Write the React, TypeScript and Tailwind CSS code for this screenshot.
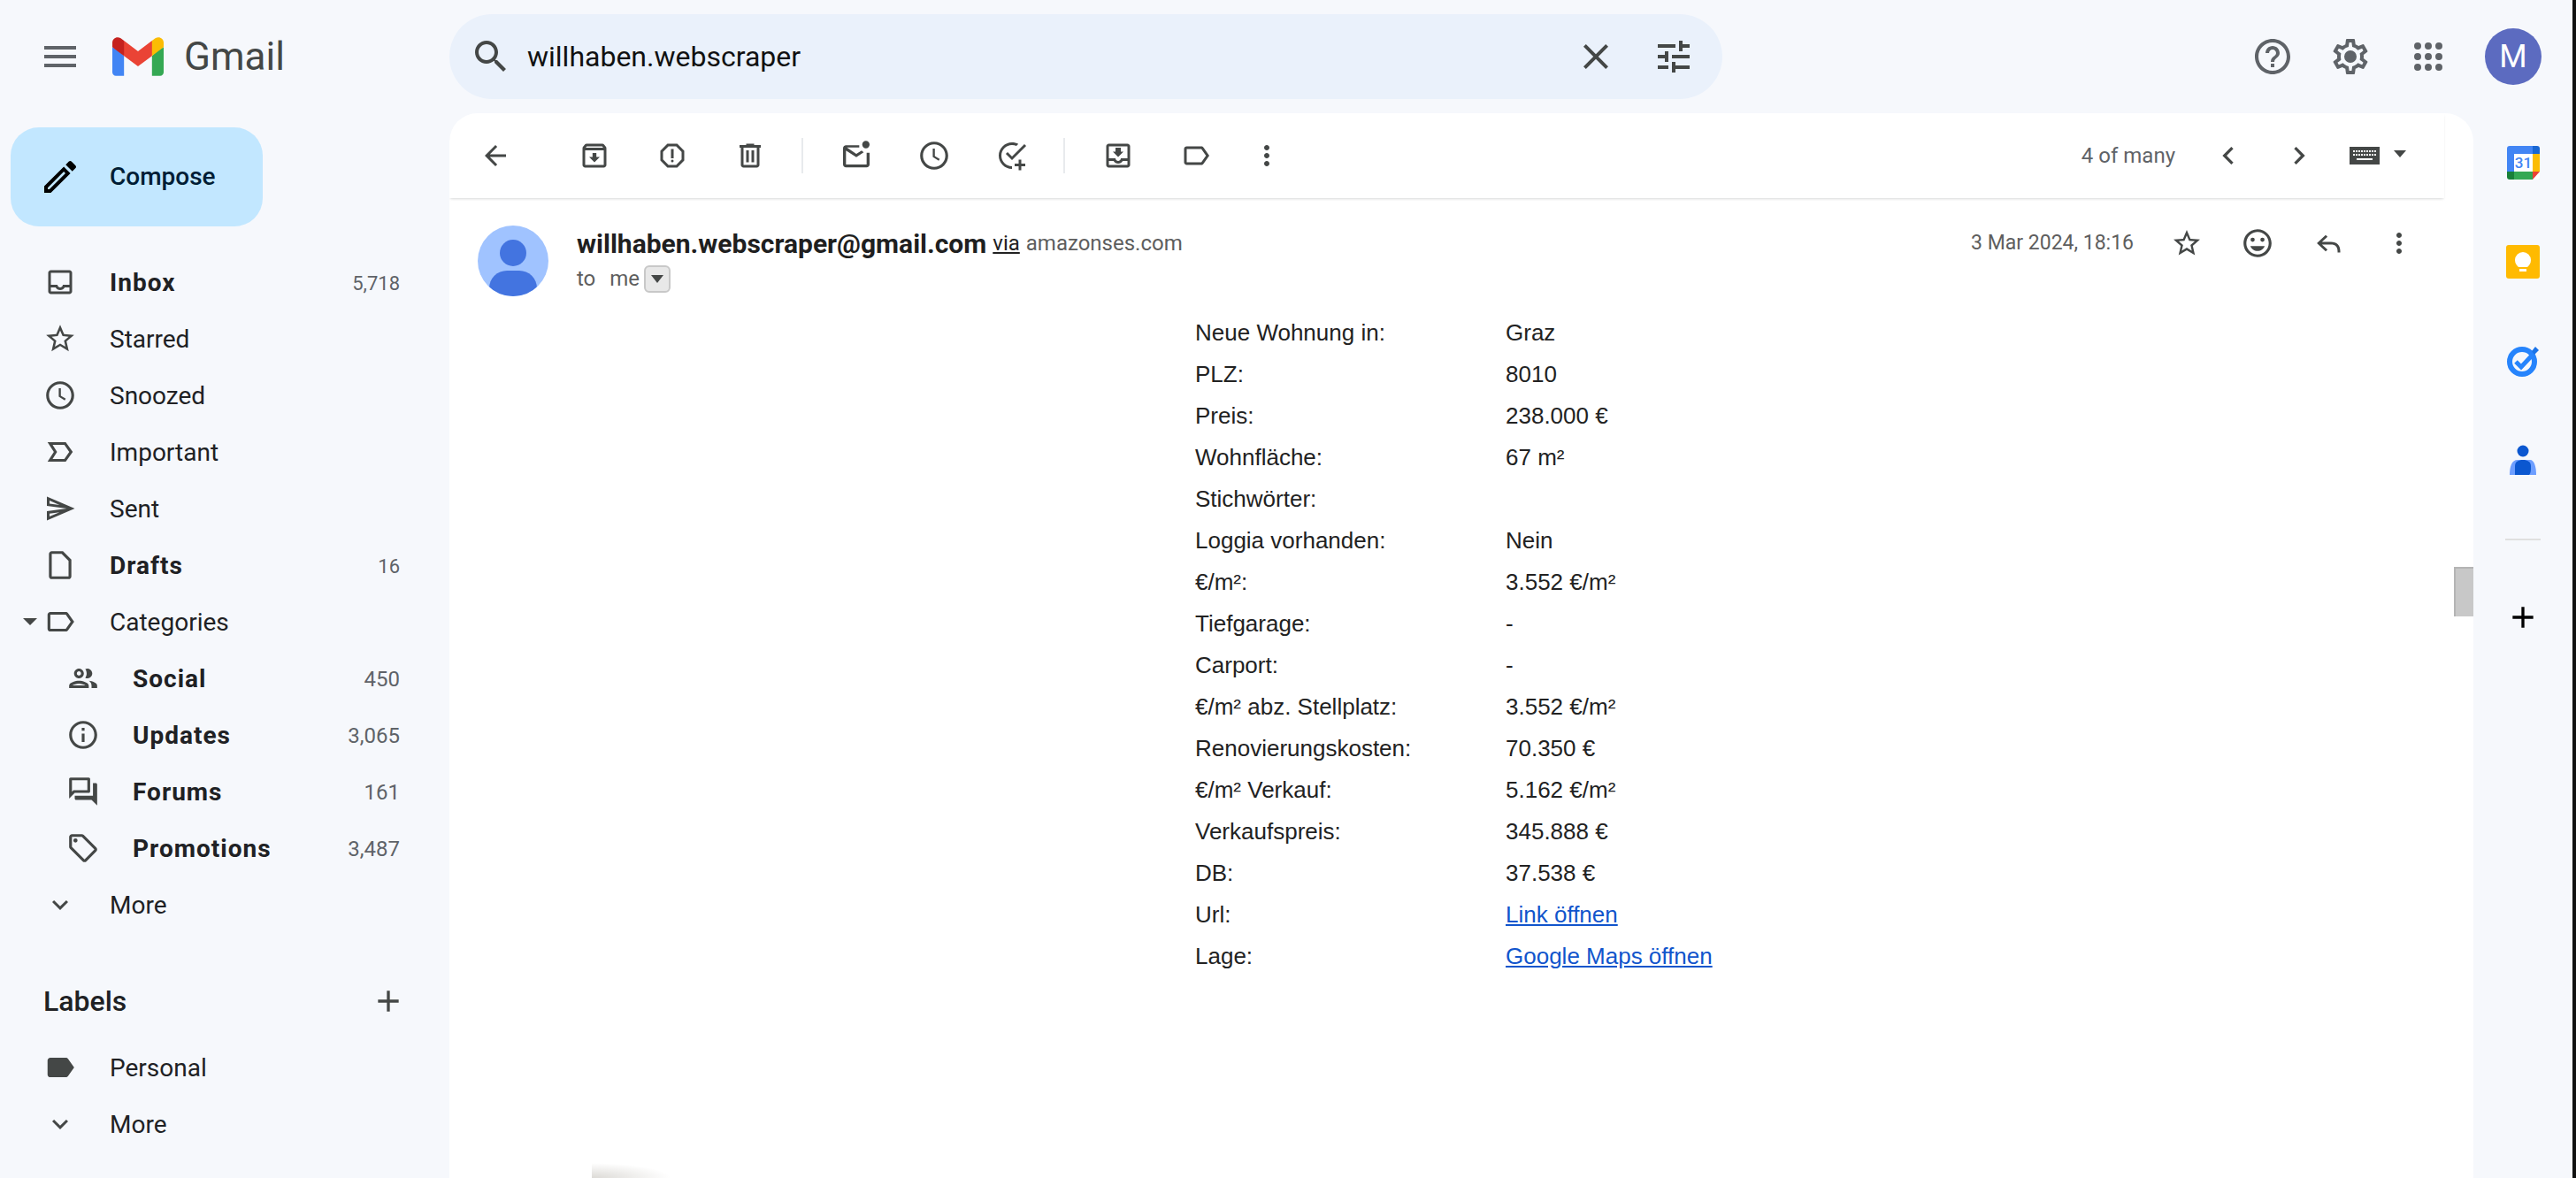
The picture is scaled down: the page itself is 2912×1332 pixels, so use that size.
const paths = {
  menu: 'M3 18h18v-2H3v2zm0-5h18v-2H3v2zm0-7v2h18V6H3z',
  search: 'M15.5 14h-.79l-.28-.27C15.41 12.59 16 11.11 16 9.5 16 5.91 13.09 3 9.5 3S3 5.91 3 9.5 5.91 16 9.5 16c1.61 0 3.09-.59 4.23-1.57l.27.28v.79l5 4.99L20.49 19l-4.99-5zm-6 0C7.01 14 5 11.99 5 9.5S7.01 5 9.5 5 14 7.01 14 9.5 11.99 14 9.5 14z',
  close: 'M19 6.41L17.59 5 12 10.59 6.41 5 5 6.41 10.59 12 5 17.59 6.41 19 12 13.41 17.59 19 19 17.59 13.41 12z',
  tune: 'M3 17v2h6v-2H3zM3 5v2h10V5H3zm10 16v-2h8v-2h-8v-2h-2v6h2zM7 9v2H3v2h4v2h2V9H7zm14 4v-2H11v2h10zm-6-4h2V7h4V5h-4V3h-2v6z',
  help: 'M11 18h2v-2h-2v2zm1-16C6.48 2 2 6.48 2 12s4.48 10 10 10 10-4.48 10-10S17.52 2 12 2zm0 18c-4.41 0-8-3.59-8-8s3.59-8 8-8 8 3.59 8 8-3.59 8-8 8zm0-14c-2.21 0-4 1.79-4 4h2c0-1.1.9-2 2-2s2 .9 2 2c0 2-3 1.75-3 5h2c0-2.25 3-2.5 3-5 0-2.21-1.79-4-4-4z',
  settings: 'M19.43 12.98c.04-.32.07-.64.07-.98 0-.34-.03-.66-.07-.98l2.11-1.65c.19-.15.24-.42.12-.64l-2-3.46c-.09-.16-.26-.25-.44-.25-.06 0-.12.01-.17.03l-2.49 1c-.52-.4-1.08-.73-1.69-.98l-.38-2.65C14.46 2.18 14.25 2 14 2h-4c-.25 0-.46.18-.49.42l-.38 2.65c-.61.25-1.17.59-1.69.98l-2.49-1c-.06-.02-.12-.03-.18-.03-.17 0-.34.09-.43.25l-2 3.46c-.13.22-.07.49.12.64l2.11 1.65c-.04.32-.07.65-.07.98 0 .33.03.66.07.98l-2.11 1.65c-.19.15-.24.42-.12.64l2 3.46c.09.16.26.25.44.25.06 0 .12-.01.17-.03l2.49-1c.52.4 1.08.73 1.69.98l.38 2.65c.03.24.24.42.49.42h4c.25 0 .46-.18.49-.42l.38-2.65c.61-.25 1.17-.59 1.69-.98l2.49 1c.06.02.12.03.18.03.17 0 .34-.09.43-.25l2-3.46c.12-.22.07-.49-.12-.64l-2.11-1.65zm-1.98-1.71c.04.31.05.52.05.73 0 .21-.02.43-.05.73l-.14 1.13.89.7 1.08.84-.7 1.21-1.27-.51-1.04-.42-.9.68c-.43.32-.84.56-1.25.73l-1.06.43-.16 1.13-.2 1.35h-1.4l-.19-1.35-.16-1.13-1.06-.43c-.43-.18-.83-.41-1.23-.71l-.91-.7-1.06.43-1.27.51-.7-1.21 1.08-.84.89-.7-.14-1.13c-.03-.31-.05-.54-.05-.74s.02-.43.05-.73l.14-1.13-.89-.7-1.08-.84.7-1.21 1.27.51 1.04.42.9-.68c.43-.32.84-.56 1.25-.73l1.06-.43.16-1.13.2-1.35h1.39l.19 1.35.16 1.13 1.06.43c.43.18.83.41 1.23.71l.91.7 1.06-.43 1.27-.51.7 1.21-1.07.85-.89.7.14 1.13zM12 8.5a3.5 3.5 0 1 0 0 7 3.5 3.5 0 0 0 0-7z',
  apps: 'M6 8a2 2 0 1 0 0-4 2 2 0 0 0 0 4zm6 0a2 2 0 1 0 0-4 2 2 0 0 0 0 4zm6 0a2 2 0 1 0 0-4 2 2 0 0 0 0 4zM6 14a2 2 0 1 0 0-4 2 2 0 0 0 0 4zm6 0a2 2 0 1 0 0-4 2 2 0 0 0 0 4zm6 0a2 2 0 1 0 0-4 2 2 0 0 0 0 4zM6 20a2 2 0 1 0 0-4 2 2 0 0 0 0 4zm6 0a2 2 0 1 0 0-4 2 2 0 0 0 0 4zm6 0a2 2 0 1 0 0-4 2 2 0 0 0 0 4z',
  edit: 'M14.06 9.02l.92.92L5.92 19H5v-.92l9.06-9.06M17.66 3c-.25 0-.51.1-.7.29l-1.83 1.83 3.75 3.75 1.83-1.83c.39-.39.39-1.02 0-1.41l-2.34-2.34c-.2-.2-.45-.29-.71-.29zm-3.6 3.19L3 17.25V21h3.75L17.81 9.94l-3.75-3.75z',
  inbox: 'M19 3H5c-1.1 0-2 .9-2 2v14c0 1.1.9 2 2 2h14c1.1 0 2-.9 2-2V5c0-1.1-.9-2-2-2zm0 16H5v-3h3.56c.69 1.19 1.97 2 3.45 2s2.75-.81 3.45-2H19v3zm0-5h-4.99c0 1.1-.9 2-2 2s-2-.9-2-2H5V5h14v9z',
  star: 'M22 9.24l-7.19-.62L12 2 9.19 8.63 2 9.24l5.46 4.73L5.82 21 12 17.27 18.18 21l-1.63-7.03L22 9.24zM12 15.4l-3.76 2.27 1-4.28-3.32-2.88 4.38-.38L12 6.1l1.71 4.04 4.38.38-3.32 2.88 1 4.28L12 15.4z',
  clock: 'M11.99 2C6.47 2 2 6.48 2 12s4.47 10 9.99 10C17.52 22 22 17.52 22 12S17.52 2 11.99 2zM12 20c-4.42 0-8-3.58-8-8s3.58-8 8-8 8 3.58 8 8-3.58 8-8 8zm.5-13H11v6l4.25 2.6.75-1.23-3.5-2.1z',
  important: 'M16 19H3l4.5-7L3 5h13l5 7-5 7zM6.6 17h8.4l3.5-5L15 7H6.6l3.2 5-3.2 5z',
  send: 'M4.01 6.03l7.51 3.22-7.52-1 .01-2.22m7.5 8.72L4 17.97v-2.22l7.51-1M2.01 3L2 10l15 2-15 2 .01 7L23 12 2.01 3z',
  draft: 'M14 2H6c-1.1 0-2 .9-2 2v16c0 1.1.9 2 2 2h12c1.1 0 2-.9 2-2V8l-6-6zm4 18H6V4h7l5 5v11z',
  label: 'M17.63 5.84C17.27 5.33 16.67 5 16 5L5 5.01C3.9 5.01 3 5.9 3 7v10c0 1.1.9 1.99 2 1.99L16 19c.67 0 1.27-.33 1.63-.84L22 12l-4.37-6.16zM16 17H5V7h11l3.55 5L16 17z',
  labelFill: 'M17.63 5.84C17.27 5.33 16.67 5 16 5L5 5.01C3.9 5.01 3 5.9 3 7v10c0 1.1.9 1.99 2 1.99L16 19c.67 0 1.27-.33 1.63-.84L22 12l-4.37-6.16z',
  people: 'M9 13.75c-2.34 0-7 1.17-7 3.5V19h14v-1.75c0-2.33-4.66-3.5-7-3.5zM4.34 17c.84-.58 2.87-1.25 4.66-1.25s3.82.67 4.66 1.25H4.34zM9 12c1.93 0 3.5-1.57 3.5-3.5S10.93 5 9 5 5.5 6.57 5.5 8.5 7.07 12 9 12zm0-5c.83 0 1.5.67 1.5 1.5S9.83 10 9 10s-1.5-.67-1.5-1.5S8.17 7 9 7zm7.04 6.81c1.16.84 1.96 1.96 1.96 3.44V19h4v-1.75c0-2.02-3.5-3.17-5.96-3.44zM15 12c1.93 0 3.5-1.57 3.5-3.5S16.93 5 15 5c-.54 0-1.04.13-1.5.35.63.89 1 1.98 1 3.15s-.37 2.26-1 3.15c.46.22.96.35 1.5.35z',
  info: 'M11 7h2v2h-2zm0 4h2v6h-2zm1-9C6.48 2 2 6.48 2 12s4.48 10 10 10 10-4.48 10-10S17.52 2 12 2zm0 18c-4.41 0-8-3.59-8-8s3.59-8 8-8 8 3.59 8 8-3.59 8-8 8z',
  forum: 'M15 4v7H5.17l-.59.59-.58.58V4h11m1-2H3c-.55 0-1 .45-1 1v14l4-4h10c.55 0 1-.45 1-1V3c0-.55-.45-1-1-1zm5 4h-2v9H6v2c0 .55.45 1 1 1h11l4 4V7c0-.55-.45-1-1-1z',
  tag: 'M21.41 11.58l-9-9C12.05 2.22 11.55 2 11 2H4c-1.1 0-2 .9-2 2v7c0 .55.22 1.05.59 1.42l9 9c.36.36.86.58 1.41.58s1.05-.22 1.41-.59l7-7c.37-.36.59-.86.59-1.41s-.23-1.06-.59-1.42zM13 20.01L4 11V4h7v-.01l9 9-7 7.02zM6.5 5a1.5 1.5 0 1 0 0 3 1.5 1.5 0 0 0 0-3z',
  expand: 'M16.59 8.59L12 13.17 7.41 8.59 6 10l6 6 6-6z',
  plus: 'M19 13h-6v6h-2v-6H5v-2h6V5h2v6h6v2z',
  back: 'M20 11H7.83l5.59-5.59L12 4l-8 8 8 8 1.41-1.41L7.83 13H20v-2z',
  archive: 'M20.54 5.23l-1.39-1.68C18.88 3.21 18.47 3 18 3H6c-.47 0-.88.21-1.16.55L3.46 5.23C3.17 5.57 3 6.02 3 6.5V19c0 1.1.9 2 2 2h14c1.1 0 2-.9 2-2V6.5c0-.48-.17-.93-.46-1.27zM6.24 5h11.52l.81.97H5.44l.8-.97zM5 19V8h14v11H5zm8.45-9h-2.9v3H8l4 4 4-4h-2.55z',
  spam: 'M15.73 3H8.27L3 8.27v7.46L8.27 21h7.46L21 15.73V8.27L15.73 3zM19 14.9L14.9 19H9.1L5 14.9V9.1L9.1 5h5.8L19 9.1v5.8zM11 7h2v7h-2zm1 8a1 1 0 1 0 0 2 1 1 0 0 0 0-2z',
  trash: 'M15 4V3H9v1H4v2h1v13c0 1.1.9 2 2 2h10c1.1 0 2-.9 2-2V6h1V4h-5zm2 15H7V6h10v13zM9 8h2v9H9zm4 0h2v9h-2z',
  unread: 'M19 10v8H5V8.5l7 4.5 5-3.2-1.4-1.3L12 10.8 5.6 6.5H14V5H5c-1.1 0-2 .9-2 2v11c0 1.1.9 2 2 2h14c1.1 0 2-.9 2-2v-8zM18.5 2a2.5 2.5 0 1 0 0 5 2.5 2.5 0 0 0 0-5z',
  addTask: 'M21.3 3.3l1.4 1.4L12 15.4l-4.7-4.7 1.4-1.4 3.3 3.3zM12 4c1.2 0 2.3.3 3.3.7l1.5-1.5C15.4 2.4 13.8 2 12 2 6.5 2 2 6.5 2 12s4.5 10 10 10v-2c-4.4 0-8-3.6-8-8s3.6-8 8-8zM19 15h-2v3h-3v2h3v3h2v-3h3v-2h-3z',
  moveInbox: 'M19 3H4.99c-1.11 0-1.98.9-1.98 2L3 19c0 1.1.88 2 1.99 2H19c1.1 0 2-.9 2-2V5c0-1.1-.9-2-2-2zm0 16H5v-3h3.56c.69 1.19 1.97 2 3.45 2s2.75-.81 3.45-2H19v3zm0-5h-4.99c0 1.1-.9 2-2 2s-2-.9-2-2H5V5h14v9zm-3-5h-2V6h-4v3H8l4 4 4-4z',
  more: 'M12 8c1.1 0 2-.9 2-2s-.9-2-2-2-2 .9-2 2 .9 2 2 2zm0 2c-1.1 0-2 .9-2 2s.9 2 2 2 2-.9 2-2-.9-2-2-2zm0 6c-1.1 0-2 .9-2 2s.9 2 2 2 2-.9 2-2-.9-2-2-2z',
  left: 'M15.41 7.41L14 6l-6 6 6 6 1.41-1.41L10.83 12z',
  right: 'M10 6L8.59 7.41 13.17 12l-4.58 4.59L10 18l6-6z',
  smile: 'M11.99 2C6.47 2 2 6.48 2 12s4.47 10 9.99 10C17.52 22 22 17.52 22 12S17.52 2 11.99 2zM12 20c-4.42 0-8-3.58-8-8s3.58-8 8-8 8 3.58 8 8-3.58 8-8 8zM8.5 8a1.5 1.5 0 1 0 0 3 1.5 1.5 0 0 0 0-3zm7 0a1.5 1.5 0 1 0 0 3 1.5 1.5 0 0 0 0-3zM12 17.5c2.33 0 4.3-1.46 5.11-3.5H6.89c.8 2.04 2.78 3.5 5.11 3.5z',
  reply: 'M10 9V5.8L3.4 12 10 18.2l1.4-1.4L7.2 13H14c3.3 0 5 1.7 5 5v1h2v-1c0-4.4-2.6-7-7-7H7.2l4.2-3.8L10 5.8z',
};

function Icon({ name, className }: { name: keyof typeof paths; className?: string }) {
  return (
    <svg viewBox="0 0 24 24" className={className ?? 'size-[36px]'} fill="currentColor">
      <path d={paths[name]} />
    </svg>
  );
}

function IconBtn({ name, className }: { name: keyof typeof paths; className?: string }) {
  return (
    <div className="flex h-[80px] w-[80px] shrink-0 items-center justify-center text-[#444746]">
      <Icon name={name} className={className} />
    </div>
  );
}

function GmailLogo() {
  return (
    <svg viewBox="0 0 256 193" className="h-[44px] w-[58px]">
      <path fill="#4285F4" d="M58.182 192.05V93.14L27.507 65.077 0 49.504v125.091c0 9.658 7.825 17.455 17.455 17.455h40.727Z" />
      <path fill="#34A853" d="M197.818 192.05h40.727c9.659 0 17.455-7.826 17.455-17.455V49.505l-31.156 17.837-27.026 25.798v98.91Z" />
      <path fill="#EA4335" d="m58.182 93.14-4.174-38.647 4.174-36.989L128 69.868l69.818-52.364 4.669 34.992-4.669 40.644L128 145.504z" />
      <path fill="#FBBC04" d="M197.818 17.504V93.14L256 49.504V26.231c0-21.585-24.64-33.89-41.89-20.945l-16.292 12.218Z" />
      <path fill="#C5221F" d="m0 49.504 26.759 20.07L58.182 93.14V17.504L41.89 5.286C24.61-7.66 0 4.646 0 26.23v23.273Z" />
    </svg>
  );
}

const mainNav = [
  { icon: 'inbox', label: 'Inbox', count: '5,718', bold: true, size: 'size-[36px]' },
  { icon: 'star', label: 'Starred', size: 'size-[38px]' },
  { icon: 'clock', label: 'Snoozed', size: 'size-[38px]' },
  { icon: 'important', label: 'Important', size: 'size-[38px]' },
  { icon: 'send', label: 'Sent', size: 'size-[36px]' },
  { icon: 'draft', label: 'Drafts', count: '16', bold: true, size: 'size-[38px]' },
] as const;

const categories = [
  { icon: 'people', label: 'Social', count: '450' },
  { icon: 'info', label: 'Updates', count: '3,065' },
  { icon: 'forum', label: 'Forums', count: '161' },
  { icon: 'tag', label: 'Promotions', count: '3,487' },
] as const;

const rows: [string, string][] = [
  ['Neue Wohnung in:', 'Graz'],
  ['PLZ:', '8010'],
  ['Preis:', '238.000 €'],
  ['Wohnfläche:', '67 m²'],
  ['Stichwörter:', ''],
  ['Loggia vorhanden:', 'Nein'],
  ['€/m²:', '3.552 €/m²'],
  ['Tiefgarage:', '-'],
  ['Carport:', '-'],
  ['€/m² abz. Stellplatz:', '3.552 €/m²'],
  ['Renovierungskosten:', '70.350 €'],
  ['€/m² Verkauf:', '5.162 €/m²'],
  ['Verkaufspreis:', '345.888 €'],
  ['DB:', '37.538 €'],
];

function NavRow({ icon, size, label, count, bold }: { icon: keyof typeof paths; size?: string; label: string; count?: string; bold?: boolean }) {
  return (
    <div className="flex h-[64px] items-center pr-[56px]">
      <div className="flex w-[136px] shrink-0 items-center justify-center text-[#444746]">
        <Icon name={icon} className={size ?? 'size-[38px]'} />
      </div>
      <span className={`-ml-[12px] pt-[2px] text-[28px] text-[#202124] ${bold ? 'font-bold tracking-[1px]' : ''}`}>{label}</span>
      {count && <span className="ml-auto pt-[2px] text-[22px] text-[#5f6368]">{count}</span>}
    </div>
  );
}

function CategoryRow({ icon, label, count }: { icon: keyof typeof paths; label: string; count: string }) {
  return (
    <div className="flex h-[64px] items-center pr-[56px]">
      <div className="flex w-[188px] shrink-0 items-center justify-center text-[#444746]">
        <Icon name={icon} className="size-[38px]" />
      </div>
      <span className="-ml-[38px] pt-[2px] text-[28px] font-bold tracking-[1px] text-[#202124]">{label}</span>
      <span className="ml-auto pt-[2px] text-[24px] text-[#5f6368]">{count}</span>
    </div>
  );
}

function Sidebar() {
  return (
    <aside className="w-[508px] shrink-0">
      <div className="ml-3 mt-4 flex h-[112px] w-[285px] items-center rounded-[32px] bg-[#c2e7ff]">
        <Icon name="edit" className="ml-[32px] size-[48px] text-black" />
        <span className="ml-[32px] text-[28px] font-medium text-[#001d35]">Compose</span>
      </div>
      <nav className="mt-[31px]">
        {mainNav.map((item) => (
          <NavRow key={item.label} icon={item.icon} size={item.size} label={item.label} count={'count' in item ? item.count : undefined} bold={'bold' in item} />
        ))}
        <div className="relative">
          <div className="absolute left-[26px] top-[28px] h-0 w-0 border-x-[8px] border-t-[8px] border-x-transparent border-t-[#444746]" />
          <NavRow icon="label" label="Categories" />
        </div>
        {categories.map((item) => (
          <CategoryRow key={item.label} icon={item.icon} label={item.label} count={item.count} />
        ))}
        <NavRow icon="expand" label="More" size="size-[36px]" />
      </nav>
      <div className="mt-[45px] flex h-[64px] items-center justify-between pl-[49px] pr-[49px]">
        <span className="text-[32px] font-medium text-[#202124]">Labels</span>
        <Icon name="plus" className="size-[40px] text-[#444746]" />
      </div>
      <div className="mt-[11px]">
        <NavRow icon="labelFill" label="Personal" />
        <NavRow icon="expand" label="More" size="size-[36px]" />
      </div>
    </aside>
  );
}

function Toolbar() {
  return (
    <div className="flex h-[96px] w-[2255px] items-center rounded-tl-[32px] pl-3 shadow-[0_2px_3px_-1px_rgba(60,64,67,0.2)]">
      <IconBtn name="back" />
      <div className="ml-8 flex gap-2">
        <IconBtn name="archive" />
        <IconBtn name="spam" />
        <IconBtn name="trash" />
      </div>
      <div className="ml-[18px] h-[40px] w-[2px] bg-[#e8eaed]" />
      <div className="ml-[20px] flex gap-2">
        <IconBtn name="unread" className="size-[40px]" />
        <IconBtn name="clock" className="size-[38px]" />
        <IconBtn name="addTask" />
      </div>
      <div className="ml-[18px] h-[40px] w-[2px] bg-[#e8eaed]" />
      <div className="ml-[20px] flex">
        <IconBtn name="moveInbox" />
        <div className="ml-2" />
        <IconBtn name="label" />
        <IconBtn name="more" />
      </div>
      <span className="ml-auto text-[24px] text-[#5f6368]">4 of many</span>
      <div className="ml-[20px] flex">
        <IconBtn name="left" className="size-[40px]" />
        <IconBtn name="right" className="size-[40px]" />
      </div>
      <svg viewBox="0 0 34 20" className="ml-[17px] h-[20px] w-[34px]">
        <rect width="34" height="20" fill="#444746" />
        <path d="M4 5h26M4 9h26" stroke="#fff" strokeWidth="2" strokeDasharray="2 1" />
        <path d="M8 14h18" stroke="#fff" strokeWidth="2" />
      </svg>
      <div className="ml-[16px] mr-[43px] mb-[5px] h-0 w-0 border-x-[7px] border-t-[8px] border-x-transparent border-t-[#444746]" />
    </div>
  );
}

function ThreadHeader() {
  return (
    <div className="flex h-[128px] pl-[32px] pr-[44px] pt-[31px]">
      <div className="relative h-[80px] w-[80px] shrink-0 overflow-hidden rounded-full bg-[#a0c3ff]">
        <div className="absolute left-[25px] top-[16px] h-[30px] w-[30px] rounded-full bg-[#4374e0]" />
        <div className="absolute left-[13px] top-[51px] h-[40px] w-[54px] rounded-[20px] bg-[#4374e0]" />
      </div>
      <div className="ml-[32px]">
        <div className="flex h-[40px] items-center">
          <span className="text-[30px] font-bold text-[#1f1f1f]">willhaben.webscraper@gmail.com</span>
          <span className="ml-[7px] text-[24px] text-[#222] underline">via</span>
          <span className="ml-[7px] text-[24px] text-[#5e5e5e]">amazonses.com</span>
        </div>
        <div className="flex h-[40px] items-center text-[24px] text-[#5e5e5e]">
          <span>to</span>
          <span className="ml-[16px]">me</span>
          <div className="ml-[5px] flex h-[31px] w-[30px] items-center justify-center rounded-[6px] border-2 border-[#c8c8c8] bg-[#e8e8e8]">
            <div className="h-0 w-0 border-x-[7px] border-t-[9px] border-x-transparent border-t-[#444746]" />
          </div>
        </div>
      </div>
      <div className="ml-auto flex h-[40px] items-center">
        <span className="mr-[20px] text-[23px] text-[#5e5e5e]">3 Mar 2024, 18:16</span>
        <IconBtn name="star" />
        <IconBtn name="smile" className="size-[38px]" />
        <IconBtn name="reply" />
        <IconBtn name="more" />
      </div>
    </div>
  );
}

function MailBody() {
  return (
    <div className="ml-[843px] mt-[1px] font-['Liberation_Sans',Arial,sans-serif] text-[26px] text-[#222]">
      {rows.map(([k, v]) => (
        <div key={k} className="flex h-[47px] items-center">
          <span className="w-[351px] shrink-0">{k}</span>
          <span>{v}</span>
        </div>
      ))}
      <div className="flex h-[47px] items-center">
        <span className="w-[351px] shrink-0">Url:</span>
        <a className="text-[#1155cc] underline">Link öffnen</a>
      </div>
      <div className="flex h-[47px] items-center">
        <span className="w-[351px] shrink-0">Lage:</span>
        <a className="text-[#1155cc] underline">Google Maps öffnen</a>
      </div>
    </div>
  );
}

function SidePanel() {
  return (
    <div className="flex w-[112px] shrink-0 flex-col items-center pt-[37px]">
      <svg viewBox="0 0 37 38" className="h-[38px] w-[37px]">
        <rect width="37" height="38" rx="3" fill="#fff" />
        <path d="M3 0h26v9H8v20H0V3a3 3 0 0 1 3-3z" fill="#4285f4" />
        <path d="M29 9h8v20h-8z" fill="#fbbc04" />
        <path d="M8 29h21v9H8z" fill="#34a853" />
        <path d="M0 29h8v9H3a3 3 0 0 1-3-3z" fill="#188038" />
        <path d="M29 0h5a3 3 0 0 1 3 3v6h-8z" fill="#1967d2" />
        <path d="M29 29h8l-8 9z" fill="#ea4335" />
        <text x="18.5" y="25" textAnchor="middle" fontFamily="Roboto" fontSize="17" fontWeight="500" fill="#4285f4">31</text>
      </svg>
      <svg viewBox="0 0 38 38" className="mt-[74px] h-[38px] w-[38px]">
        <rect width="38" height="38" rx="3" fill="#ffba00" />
        <path d="M14 25c-2-2-4-4-4-8a9 9 0 0 1 18 0c0 4-2 6-4 8z" fill="#fff" />
        <rect x="15" y="27" width="8" height="3" fill="#fff" />
      </svg>
      <svg viewBox="0 0 40 40" className="mt-[73px] h-[40px] w-[40px]">
        <circle cx="19" cy="21" r="14" fill="none" stroke="#2684fc" strokeWidth="6" />
        <path d="M12 21l6 6 14-15" fill="none" stroke="#2684fc" strokeWidth="5" />
        <path d="M30 9l4-5 4 4-5 5z" fill="#1a73e8" />
      </svg>
      <svg viewBox="0 0 30 34" className="mt-[75px] h-[34px] w-[30px]">
        <path d="M0 34c0-9 2-17 9-17h14c5 0 7 8 7 17z" fill="#6d9eff" />
        <path d="M6 34V24c0-5 4-7 9-7s9 2 9 7c0 5 0 8-2 10z" fill="#0b57d0" />
        <circle cx="15" cy="7" r="6.5" fill="#0b57d0" />
      </svg>
      <div className="mt-[72px] h-[2px] w-[40px] bg-[#e0e0e0]" />
      <Icon name="plus" className="mt-[67px] size-[40px] text-black" />
    </div>
  );
}

export default function App() {
  return (
    <div className="relative h-[1332px] w-[2912px] overflow-hidden bg-[#f6f8fc] font-[Roboto,sans-serif]">
      <header className="flex h-[128px] items-center">
        <div className="flex w-[508px] shrink-0 items-center">
          <Icon name="menu" className="ml-[44px] size-[48px] text-[#5f6368]" />
          <div className="ml-[35px]">
            <GmailLogo />
          </div>
          <span className="ml-[23px] text-[44px] leading-none text-[#444746]">Gmail</span>
        </div>
        <div className="flex h-[96px] w-[1439px] shrink-0 items-center rounded-full bg-[#eaf1fb]">
          <Icon name="search" className="ml-[23px] size-[48px] text-[#444746]" />
          <span className="ml-[17px] text-[32px] text-[#111]">willhaben.webscraper</span>
          <Icon name="close" className="ml-auto size-[48px] text-[#444746]" />
          <Icon name="tune" className="ml-[40px] mr-[31px] size-[48px] text-[#444746]" />
        </div>
        <div className="ml-auto flex items-center pr-[39px]">
          <Icon name="help" className="size-[48px] text-[#5f6368]" />
          <Icon name="settings" className="ml-[40px] size-[48px] text-[#5f6368]" />
          <Icon name="apps" className="ml-[40px] size-[48px] text-[#5f6368]" />
          <div className="ml-[40px] flex h-[64px] w-[64px] items-center justify-center rounded-full bg-[#5c6bc0] text-[36px] text-white">M</div>
        </div>
      </header>
      <div className="flex h-[1204px]">
        <Sidebar />
        <main className="relative w-[2288px] shrink-0 overflow-hidden rounded-t-[32px] bg-white">
          <Toolbar />
          <ThreadHeader />
          <MailBody />
          {/* scrollbar thumb and the cut off image at the bottom */}
          <div className="absolute right-0 top-[513px] h-[56px] w-[22px] border-l-2 border-t-2 border-[#b4b4b4] bg-[#c8c8c8]" />
          <div className="absolute bottom-0 left-[161px] h-[17px] w-[90px] bg-[radial-gradient(ellipse_at_bottom_left,#dcdad6,transparent_70%)]" />
        </main>
        <SidePanel />
      </div>
      {/* dark edge of the window behind */}
      <div className="absolute right-0 top-0 h-[1332px] w-[4px] bg-[#111]" />
    </div>
  );
}
